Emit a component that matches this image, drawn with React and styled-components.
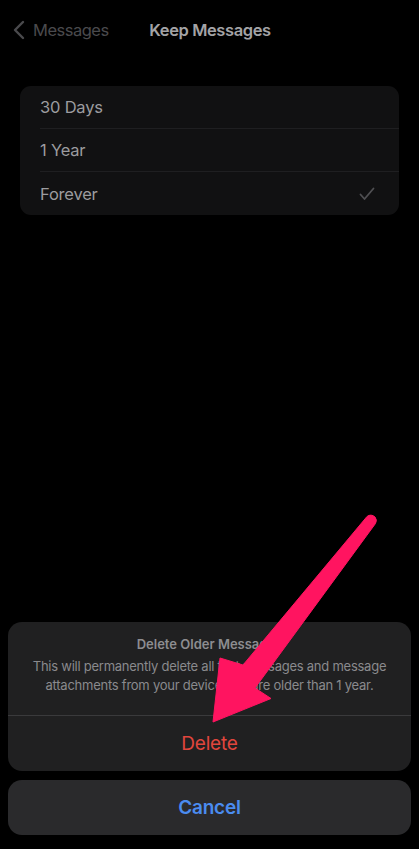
import styled, { createGlobalStyle } from "styled-components";

const GlobalStyle = createGlobalStyle`
  html, body {
    margin: 0;
    padding: 0;
    background: #000;
  }
  body {
    font-family: "Inter", "Liberation Sans", sans-serif;
    -webkit-font-smoothing: antialiased;
  }
`;

const options = [
  { label: "30 Days", checked: false },
  { label: "1 Year", checked: false },
  { label: "Forever", checked: true },
];

export default function App() {
  return (
    <Page>
      <GlobalStyle />
      <NavBar>
        <BackButton>
          <svg width="12" height="20" viewBox="0 0 12 20">
            <path
              d="M10 2 L2 10 L10 18"
              fill="none"
              stroke="#4a4a4d"
              strokeWidth="2.4"
              strokeLinecap="round"
              strokeLinejoin="round"
            />
          </svg>
          <BackLabel>Messages</BackLabel>
        </BackButton>
        <NavTitle>Keep Messages</NavTitle>
        <span />
      </NavBar>

      <OptionList>
        {options.map((o, i) => (
          <OptionRow key={o.label} last={i === options.length - 1}>
            <OptionLabel>{o.label}</OptionLabel>
            {o.checked && (
              <svg width="16" height="14" viewBox="0 0 16 14">
                <path
                  d="M1.5 7.5 L5.5 12 L14.5 1.5"
                  fill="none"
                  stroke="#4f4f52"
                  strokeWidth="1.8"
                  strokeLinecap="round"
                  strokeLinejoin="round"
                />
              </svg>
            )}
          </OptionRow>
        ))}
      </OptionList>

      <Sheet>
        <SheetGroup>
          <SheetHeader>
            <SheetTitle>Delete Older Messages</SheetTitle>
            <SheetBody>
              This will permanently delete all text messages and message
              attachments from your device that are older than 1 year.
            </SheetBody>
          </SheetHeader>
          <SheetAction color="#e0463d" weight={400}>
            Delete
          </SheetAction>
        </SheetGroup>
        <SheetGroup light>
          <SheetAction color="#4a8cf0" weight={600}>
            Cancel
          </SheetAction>
        </SheetGroup>
      </Sheet>

      <ArrowOverlay width="419" height="849" viewBox="0 0 419 849">
        <path
          d="M367 516.5 Q371 513.5 375 517 Q377.5 520 375.5 523.5 L255 688 L271 698.5 L213 722 L220 658 L243 665 Z"
          fill="#ff1460"
          stroke="#ff1460"
          strokeWidth="1"
          strokeLinejoin="round"
        />
      </ArrowOverlay>
    </Page>
  );
}

const Page = styled.div`
  position: relative;
  height: 849px;
  display: flex;
  flex-direction: column;
  background: #000;
  overflow: hidden;
`;

const NavBar = styled.div`
  height: 60px;
  display: grid;
  grid-template-columns: 1fr auto 1fr;
  align-items: center;
  padding: 0 12px 0 13px;
`;

const BackButton = styled.div`
  display: flex;
  align-items: center;
  gap: 8px;
`;

const BackLabel = styled.span`
  font-size: 16.5px;
  color: #4a4a4d;
  letter-spacing: -0.5px;
`;

const NavTitle = styled.span`
  font-size: 16.5px;
  font-weight: 600;
  color: #a3a3a6;
  letter-spacing: -0.4px;
`;

const OptionList = styled.div`
  margin: 26px 20px 0;
  background: #111112;
  border-radius: 11px;
  overflow: hidden;
`;

const OptionRow = styled.div`
  height: 43px;
  margin-left: 20px;
  padding-right: 24px;
  display: flex;
  align-items: center;
  justify-content: space-between;
  border-bottom: ${(p) => (p.last ? "none" : "1px solid #1f1f21")};
  box-sizing: border-box;
`;

const OptionLabel = styled.span`
  font-size: 16.5px;
  color: #9c9c9f;
  letter-spacing: -0.2px;
`;

const Sheet = styled.div`
  margin-top: auto;
  padding: 0 8px 14px;
  display: flex;
  flex-direction: column;
  gap: 9px;
`;

const SheetGroup = styled.div`
  background: ${(p) => (p.light ? "#2a2a2c" : "#202021")};
  border-radius: 14px;
  overflow: hidden;
`;

const SheetHeader = styled.div`
  padding: 14px 16px 20px;
  display: flex;
  flex-direction: column;
  align-items: center;
  gap: 5px;
  text-align: center;
  border-bottom: 1px solid #3a3a3c;
`;

const SheetTitle = styled.div`
  font-size: 13px;
  font-weight: 600;
  color: #8d8d90;
  line-height: 16px;
`;

const SheetBody = styled.div`
  font-size: 13px;
  color: #8a8a8d;
  line-height: 19px;
  letter-spacing: -0.25px;
`;

const SheetAction = styled.div`
  height: 55px;
  display: flex;
  align-items: center;
  justify-content: center;
  font-size: 19px;
  font-weight: ${(p) => p.weight};
  color: ${(p) => p.color};
  letter-spacing: -0.2px;
`;

const ArrowOverlay = styled.svg`
  position: absolute;
  inset: 0;
  pointer-events: none;
`;
